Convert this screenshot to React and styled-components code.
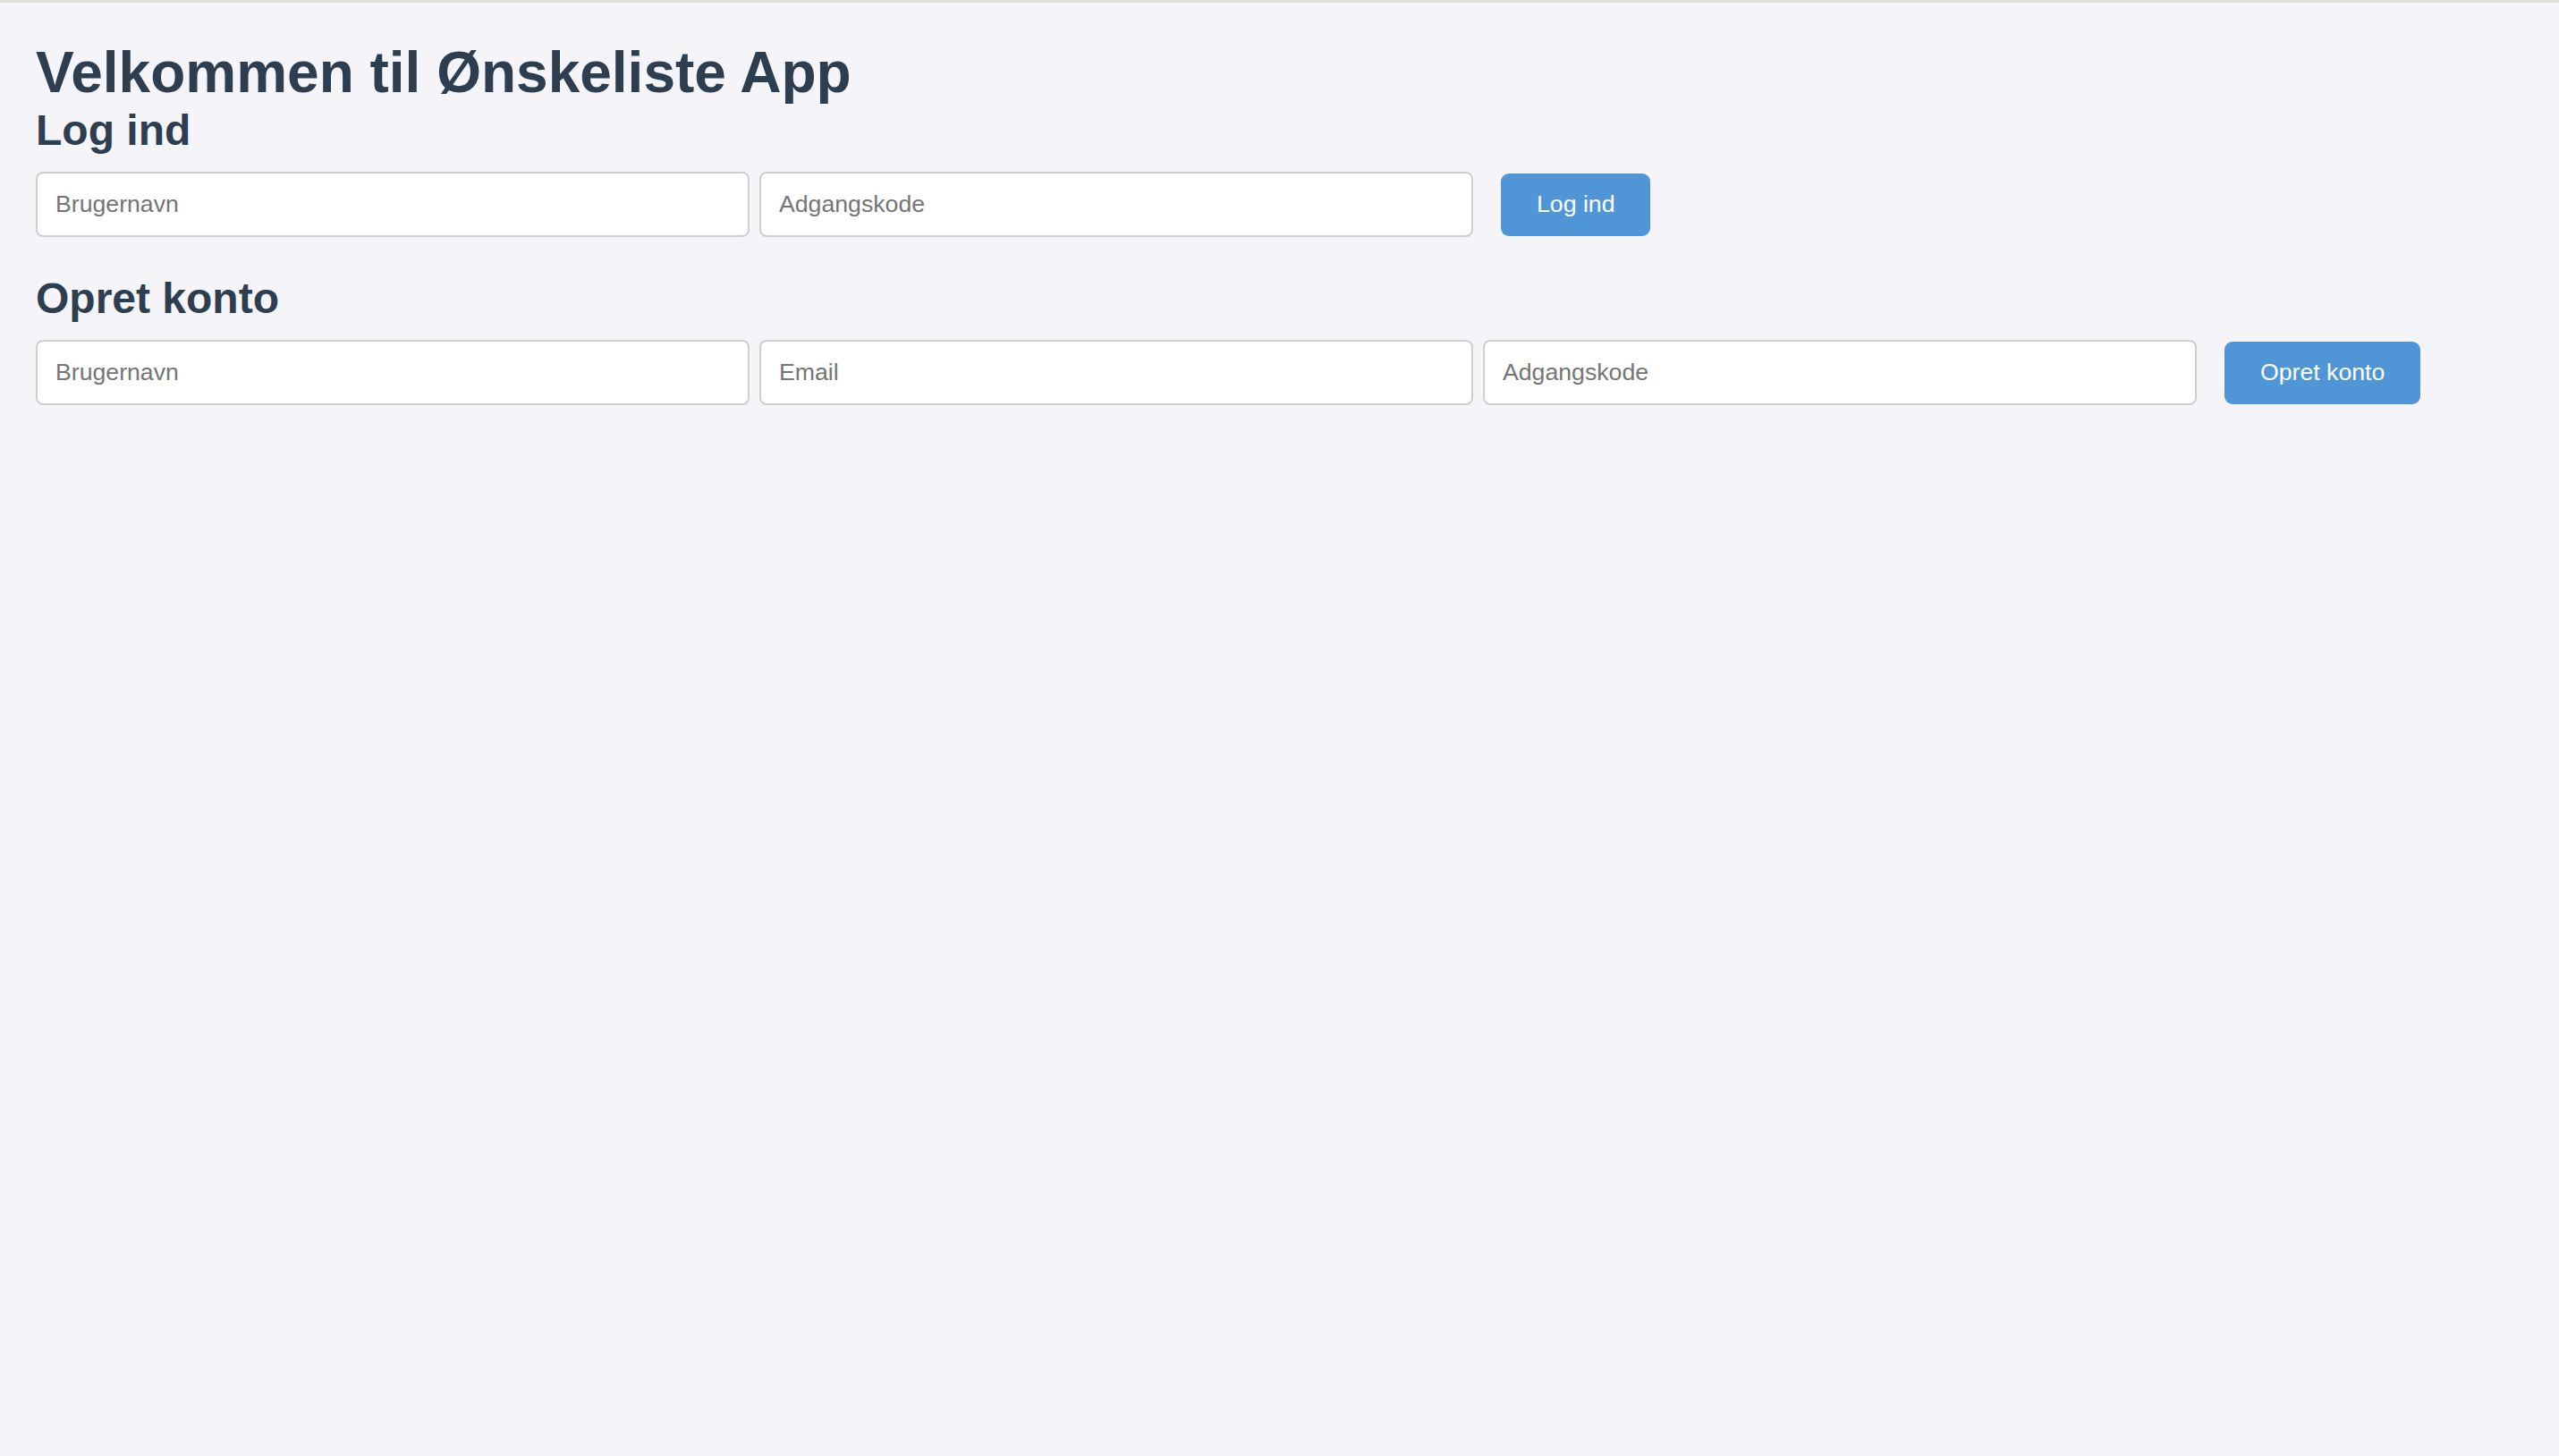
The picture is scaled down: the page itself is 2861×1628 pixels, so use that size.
import React from "react";
import styled, { createGlobalStyle } from "styled-components";

const GlobalStyle = createGlobalStyle`
  html, body {
    margin: 0;
    padding: 0;
    background: #f4f4f9;
  }
  body {
    font-family: "Liberation Sans", Arial, Helvetica, sans-serif;
    min-height: 1628px;
  }
  * { box-sizing: border-box; }
`;

const Page = styled.div`
  border-top: 3px solid #e0e0da;
  padding: 42px 40px 0;
  min-height: 1628px;
  background: #f4f4f9;
`;

const Title = styled.h1`
  margin: 0;
  font-size: 64px;
  line-height: 72px;
  font-weight: 700;
  color: #2c3e50;
`;

const Section = styled.section`
  margin-top: ${(p) => p.$top || 0}px;
`;

const Heading = styled.h2`
  margin: 0 0 18px;
  padding-top: 1px;
  font-size: 48px;
  line-height: 56px;
  font-weight: 700;
  color: #2c3e50;
`;

const Row = styled.form`
  display: flex;
  align-items: center;
  gap: 11px;
  margin: 0;
`;

const Field = styled.input`
  flex: 0 0 798px;
  width: 798px;
  height: 73px;
  padding: 0 20px;
  border: 2px solid #cfcfcf;
  border-radius: 8px;
  background: #ffffff;
  font-family: "Liberation Sans", Arial, sans-serif;
  font-size: 26.67px;
  color: #333;
  outline: none;
  &::placeholder {
    color: #757575;
  }
`;

const Button = styled.button`
  flex: 0 0 auto;
  height: 70px;
  margin-left: 20px;
  padding: 0 40px;
  border: none;
  border-radius: 9px;
  background: #5096d6;
  color: #ffffff;
  font-family: "Liberation Sans", Arial, sans-serif;
  font-size: 26.67px;
  cursor: pointer;
`;

export default function App() {
  return (
    <>
      <GlobalStyle />
      <Page>
        <Title>Velkommen til Ønskeliste App</Title>
        <Section>
          <Heading>Log ind</Heading>
          <Row onSubmit={(e) => e.preventDefault()}>
            <Field type="text" placeholder="Brugernavn" />
            <Field type="password" placeholder="Adgangskode" />
            <Button type="submit">Log ind</Button>
          </Row>
        </Section>
        <Section $top={40}>
          <Heading>Opret konto</Heading>
          <Row onSubmit={(e) => e.preventDefault()}>
            <Field type="text" placeholder="Brugernavn" />
            <Field type="email" placeholder="Email" />
            <Field type="password" placeholder="Adgangskode" />
            <Button type="submit">Opret konto</Button>
          </Row>
        </Section>
      </Page>
    </>
  );
}
